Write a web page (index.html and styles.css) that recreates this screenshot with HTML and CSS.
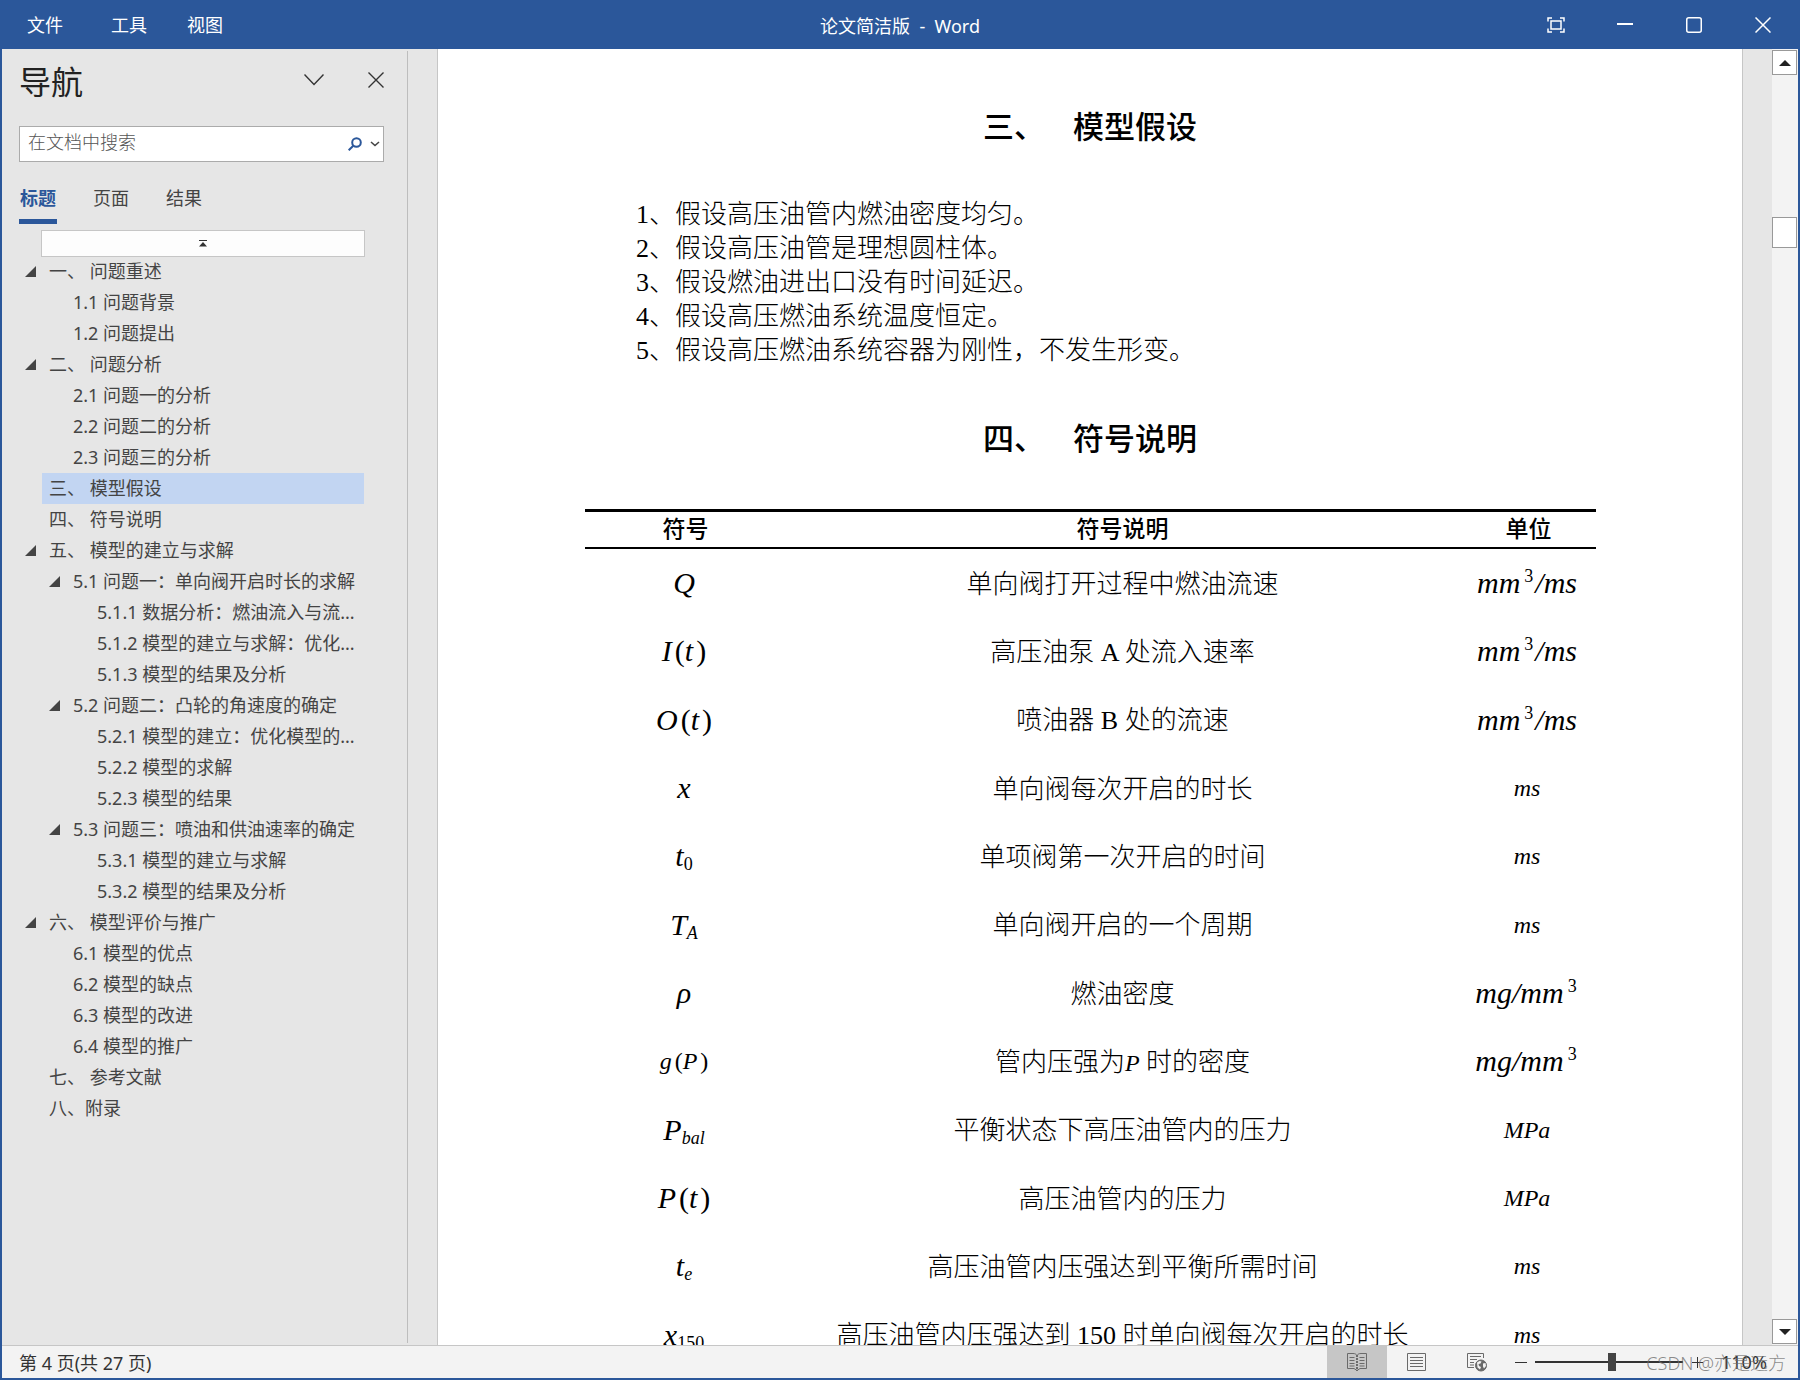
FILE: index.html
```html
<!DOCTYPE html>
<html lang="zh-CN">
<head>
<meta charset="utf-8">
<title>论文简洁版 - Word</title>
<link rel="stylesheet" href="styles.css">
</head>
<body>
<div class="window">
  <header class="titlebar">
    <nav class="menus" aria-label="菜单">
      <button type="button" class="menu menu-file">文件</button>
      <button type="button" class="menu">工具</button>
      <button type="button" class="menu">视图</button>
    </nav>
    <h1 class="title">论文简洁版  -  Word</h1>
    <div class="window-controls">
      <button type="button" class="control" aria-label="自动隐藏阅读工具栏">
        <svg width="18" height="16" viewBox="0 0 18 16" fill="none" stroke="currentColor" stroke-width="1.500"><path d="M1 4.500V1H5M13 1h4v3.500M17 11.500V15h-4M5 15H1v-3.500"/><rect x="4" y="4" width="10" height="8"/></svg>
      </button>
      <button type="button" class="control" aria-label="最小化">
        <svg width="16" height="16" viewBox="0 0 16 16"><path d="M0 6h16v2H0z" fill="currentColor"/></svg>
      </button>
      <button type="button" class="control" aria-label="最大化">
        <svg width="16" height="16" viewBox="0 0 16 16"><rect x=".75" y=".75" width="14.500" height="14.500" rx="2" fill="none" stroke="currentColor" stroke-width="1.500"/></svg>
      </button>
      <button type="button" class="control" aria-label="关闭">
        <svg width="16" height="16" viewBox="0 0 16 16"><path d="M.5.5l15 15M15.500.5l-15 15" fill="none" stroke="currentColor" stroke-width="1.500"/></svg>
      </button>
    </div>
  </header>

  <div class="workspace">
    <aside class="pane">
      <div class="pane-head">
        <h2 class="pane-title">导航</h2>
        <div class="pane-actions">
          <button type="button" class="pane-button" aria-label="任务窗格选项"><svg width="20" height="12" viewBox="0 0 20 12"><path d="M.5.5L10 10.500 19.500.5" fill="none" stroke="currentColor" stroke-width="1.400"/></svg></button>
          <button type="button" class="pane-button" aria-label="关闭窗格"><svg width="16" height="16" viewBox="0 0 16 16"><path d="M.5.5l15 15M15.500.5l-15 15" fill="none" stroke="currentColor" stroke-width="1.400"/></svg></button>
        </div>
      </div>
      <div class="search">
        <input class="search-input" type="text" placeholder="在文档中搜索" aria-label="在文档中搜索">
        <button type="button" class="search-button" aria-label="搜索"><svg width="14" height="14" viewBox="0 0 14 14" fill="none" stroke="#2b579a" stroke-width="2"><circle cx="8.500" cy="5.500" r="4.300"/><path d="M5.300 8.700L.7 13.300"/></svg></button>
        <button type="button" class="search-button" aria-label="搜索选项"><svg width="10" height="6" viewBox="0 0 10 6"><path d="M1 1l4 3.500L9 1" fill="none" stroke="#444" stroke-width="1.600"/></svg></button>
      </div>
      <div class="tabs">
        <button type="button" class="tab tab-active">标题</button>
        <button type="button" class="tab">页面</button>
        <button type="button" class="tab">结果</button>
      </div>
      <button type="button" class="jump-top" aria-label="跳转到开头"><svg width="8" height="7" viewBox="0 0 8 7"><path d="M0 0h8v1H0zM4 2l4 4.500H0z" fill="#333"/></svg></button>
      <ul class="outline">
        <li class="item parent"><a href="#s1">一、 问题重述</a></li>
        <li class="item level2"><a href="#s1-1">1.1 问题背景</a></li>
        <li class="item level2"><a href="#s1-2">1.2 问题提出</a></li>
        <li class="item parent"><a href="#s2">二、 问题分析</a></li>
        <li class="item level2"><a href="#s2-1">2.1 问题一的分析</a></li>
        <li class="item level2"><a href="#s2-2">2.2 问题二的分析</a></li>
        <li class="item level2"><a href="#s2-3">2.3 问题三的分析</a></li>
        <li class="item current"><a href="#s3">三、 模型假设</a></li>
        <li class="item"><a href="#s4">四、 符号说明</a></li>
        <li class="item parent"><a href="#s5">五、 模型的建立与求解</a></li>
        <li class="item level2 parent"><a href="#s5-1">5.1 问题一：单向阀开启时长的求解</a></li>
        <li class="item level3"><a href="#s5-1-1">5.1.1 数据分析：燃油流入与流...</a></li>
        <li class="item level3"><a href="#s5-1-2">5.1.2 模型的建立与求解：优化...</a></li>
        <li class="item level3"><a href="#s5-1-3">5.1.3 模型的结果及分析</a></li>
        <li class="item level2 parent"><a href="#s5-2">5.2 问题二：凸轮的角速度的确定</a></li>
        <li class="item level3"><a href="#s5-2-1">5.2.1 模型的建立：优化模型的...</a></li>
        <li class="item level3"><a href="#s5-2-2">5.2.2 模型的求解</a></li>
        <li class="item level3"><a href="#s5-2-3">5.2.3 模型的结果</a></li>
        <li class="item level2 parent"><a href="#s5-3">5.3 问题三：喷油和供油速率的确定</a></li>
        <li class="item level3"><a href="#s5-3-1">5.3.1 模型的建立与求解</a></li>
        <li class="item level3"><a href="#s5-3-2">5.3.2 模型的结果及分析</a></li>
        <li class="item parent"><a href="#s6">六、 模型评价与推广</a></li>
        <li class="item level2"><a href="#s6-1">6.1 模型的优点</a></li>
        <li class="item level2"><a href="#s6-2">6.2 模型的缺点</a></li>
        <li class="item level2"><a href="#s6-3">6.3 模型的改进</a></li>
        <li class="item level2"><a href="#s6-4">6.4 模型的推广</a></li>
        <li class="item"><a href="#s7">七、 参考文献</a></li>
        <li class="item"><a href="#s8">八、附录</a></li>
      </ul>
    </aside>

    <main class="page">
      <h2 class="heading" id="s3"><span class="heading-number">三、</span>模型假设</h2>
      <div class="assumptions">
        <p>1、假设高压油管内燃油密度均匀。</p>
        <p>2、假设高压油管是理想圆柱体。</p>
        <p>3、假设燃油进出口没有时间延迟。</p>
        <p>4、假设高压燃油系统温度恒定。</p>
        <p>5、假设高压燃油系统容器为刚性，不发生形变。</p>
      </div>
      <h2 class="heading heading-second" id="s4"><span class="heading-number">四、</span>符号说明</h2>
      <table class="symbols">
        <thead>
          <tr><th class="col-symbol">符号</th><th>符号说明</th><th class="col-unit">单位</th></tr>
        </thead>
        <tbody>
          <tr><td class="math">Q</td><td>单向阀打开过程中燃油流速</td><td class="math">mm<sup>3</sup>/ms</td></tr>
          <tr><td class="math">I<span class="paren">(</span>t<span class="paren">)</span></td><td>高压油泵 A 处流入速率</td><td class="math">mm<sup>3</sup>/ms</td></tr>
          <tr><td class="math">O<span class="paren">(</span>t<span class="paren">)</span></td><td>喷油器 B 处的流速</td><td class="math">mm<sup>3</sup>/ms</td></tr>
          <tr><td class="math">x</td><td>单向阀每次开启的时长</td><td class="math small">ms</td></tr>
          <tr><td class="math">t<sub class="digits">0</sub></td><td>单项阀第一次开启的时间</td><td class="math small">ms</td></tr>
          <tr><td class="math">T<sub>A</sub></td><td>单向阀开启的一个周期</td><td class="math small">ms</td></tr>
          <tr><td class="math">ρ</td><td>燃油密度</td><td class="math">mg/mm<sup>3</sup></td></tr>
          <tr><td class="math small">g<span class="paren">(</span>P<span class="paren">)</span></td><td>管内压强为<i class="math small">P</i> 时的密度</td><td class="math">mg/mm<sup>3</sup></td></tr>
          <tr><td class="math">P<sub>bal</sub></td><td>平衡状态下高压油管内的压力</td><td class="math small">MPa</td></tr>
          <tr><td class="math">P<span class="paren">(</span>t<span class="paren">)</span></td><td>高压油管内的压力</td><td class="math small">MPa</td></tr>
          <tr><td class="math">t<sub>e</sub></td><td>高压油管内压强达到平衡所需时间</td><td class="math small">ms</td></tr>
          <tr><td class="math">x<sub class="digits">150</sub></td><td>高压油管内压强达到 150 时单向阀每次开启的时长</td><td class="math small">ms</td></tr>
        </tbody>
      </table>
    </main>

    <div class="scrollbar">
      <button type="button" class="scroll-button" aria-label="向上滚动"><svg width="12" height="6" viewBox="0 0 12 6"><path d="M6 0l6 6H0z" fill="#222"/></svg></button>
      <div class="scroll-thumb"></div>
      <button type="button" class="scroll-button scroll-down" aria-label="向下滚动"><svg width="12" height="6" viewBox="0 0 12 6"><path d="M6 6l6-6H0z" fill="#222"/></svg></button>
    </div>
  </div>

  <footer class="statusbar">
    <span class="page-count">第 4 页(共 27 页)</span>
    <button type="button" class="view view-active" aria-label="阅读视图">
      <svg width="20" height="20" viewBox="0 0 20 20" fill="none" stroke="#6a6a6a"><path d="M10 3.500C9 2 8 1.500 6 1.500H.5v15H7l3 2 3-2h6.500v-15H14c-2 0-3 .5-4 2z"/><path d="M2.500 5.500h5M2.500 8.500h5M2.500 11.500h5M2.500 14h5M12.500 5.500h5M12.500 8.500h5M12.500 11.500h5M12.500 14h5"/><path d="M10 3v16" stroke-width="2" stroke-dasharray="2 1"/></svg>
    </button>
    <button type="button" class="view" aria-label="页面视图">
      <svg width="20" height="20" viewBox="0 0 20 20" fill="none" stroke="#6a6a6a"><path d="M.5 1.500h18v17H.5zM3 5.500h13M3 8.500h13M3 11.500h13M3 14.500h13"/></svg>
    </button>
    <button type="button" class="view" aria-label="Web 版式">
      <svg width="20" height="20" viewBox="0 0 20 20" fill="none" stroke="#6a6a6a"><path d="M16.500 6V1.500H.5v14H7M3 4.500h11M3 7.500h7M3 10.500h4M3 13h4"/><circle cx="14" cy="13.500" r="5.500" fill="#6a6a6a"/><path d="M10 10.500l2.500-1.500 2 .5-1 2-2 .5.500 2 2 1-1 2.500-2.500-2zM16 11.500l2.500-.5.500 3-2 2.500-1-2z" fill="#f3f3f3" stroke="none"/></svg>
    </button>
    <button type="button" class="zoom-step" aria-label="缩小"><svg width="12" height="12" viewBox="0 0 12 12"><path d="M0 6.500h12" stroke="#333"/></svg></button>
    <input class="zoom-slider" type="range" min="0" max="100" value="52" aria-label="缩放">
    <button type="button" class="zoom-step" aria-label="放大"><svg width="12" height="12" viewBox="0 0 12 12"><path d="M1 6.500h11M6.500 1v11" stroke="#333"/></svg></button>
    <span class="zoom-value">110%</span>
    <span class="watermark">CSDN @亦是远方</span>
  </footer>
</div>
</body>
</html>
```
FILE: styles.css
```css
* { box-sizing: border-box; }

body {
  margin: 0;
  font-family: "Noto Sans", "Noto Sans CJK SC", sans-serif;
  font-size: 18px;
  color: #444;
}

h1, h2, p, ul { margin: 0; padding: 0; }

button {
  padding: 0;
  border: 0;
  background: none;
  font: inherit;
  color: inherit;
}

svg { display: block; }

.window {
  display: flex;
  flex-direction: column;
  height: 100vh;
  border: solid #2b579a;
  border-width: 0 2px 2px;
  background: #e6e6e6;
}

/* Title bar */
.titlebar {
  display: grid;
  grid-template-columns: 1fr auto 1fr;
  align-items: center;
  flex: none;
  height: 49px;
  background: #2b579a;
  color: #fff;
}

.menus { display: flex; gap: 40px; padding-left: 25px; }
.menu { line-height: 30px; }
.menu-file { margin-right: 8px; }
.title { font-size: 18px; font-weight: 400; white-space: pre; }
.window-controls { display: flex; justify-content: flex-end; padding-right: 1px; }
.control { display: grid; place-items: center; width: 69px; height: 49px; }

/* Workspace */
.workspace { display: flex; flex: 1; min-height: 0; }

.pane {
  flex: none;
  width: 406px;
  margin: 2px 29px 2px 0;
  padding: 8px 23px 0 17px;
  border-right: 1px solid #bdbdbd;
}

.pane-head { display: flex; justify-content: space-between; height: 67px; }
.pane-title { font-size: 32px; font-weight: 400; line-height: 46px; color: #222; }
.pane-actions { display: flex; gap: 44px; align-items: center; height: 42px; color: #333; }

.search {
  display: flex;
  align-items: center;
  gap: 8px;
  height: 36px;
  padding: 0 3px 0 8px;
  border: 1px solid #ababab;
  background: #fff;
}

.search-input {
  flex: 1;
  min-width: 0;
  padding: 0 0 4px;
  border: 0;
  background: none;
  font: inherit;
  font-weight: 300;
}

.search-input::placeholder { color: #555; opacity: 1; }

.tabs { display: flex; gap: 35px; padding-top: 20px; }
.tab { height: 42px; padding: 0 1px 10px; line-height: 32px; border-bottom: 5px solid transparent; }
.tab-active { border-color: #2b579a; font-weight: 700; color: #2b579a; }

.jump-top {
  display: grid;
  place-items: center;
  width: 324px;
  height: 27px;
  margin: 6px 0 0 22px;
  border: 1px solid #c6c6c6;
  background: #fdfdfd;
}

.outline { list-style: none; margin: -1px 20px 0 0; white-space: nowrap; }
.item { display: flex; align-items: center; height: 31px; margin-left: 23px; padding-left: 7px; }
.item a { color: inherit; text-decoration: none; line-height: 31px; }
.level2 { padding-left: 31px; }
.level3 { padding-left: 55px; }
.current { background: #c2d5f2; }

.parent::before {
  content: "";
  width: 11px;
  height: 11px;
  margin: 0 13px 0 -24px;
  background: #444;
  clip-path: polygon(100% 0, 100% 100%, 0 100%);
}

/* Document */
.page {
  flex: 1;
  min-width: 0;
  padding-top: 59px;
  overflow: hidden;
  border: solid #c6c6c6;
  border-width: 0 1px;
  background: #fff;
  font-family: "Liberation Serif", "Noto Sans CJK SC", serif;
  font-size: 26px;
  font-weight: 300;
  color: #000;
}

.heading { font-size: 31px; font-weight: 500; line-height: 40px; text-align: center; }
.heading-number { margin-right: 28px; }
.heading-second { margin-top: 52px; }
.assumptions { margin: 50px 0 0 198px; line-height: 34px; }

.symbols {
  width: 1011px;
  max-width: 100%;
  margin: 49px auto 0;
  table-layout: fixed;
  border-collapse: separate;
  border-spacing: 0;
  text-align: center;
  white-space: nowrap;
}

.symbols th {
  height: 40px;
  padding: 1px 0 0 3px;
  border: solid #000;
  border-width: 3px 0 2px;
  font-size: 23px;
  font-weight: 500;
  line-height: 34px;
}

.symbols td { height: 68px; padding: 3px 0 0 3px; line-height: 34px; }
.symbols tr:nth-child(3n) td { height: 69px; }
.col-symbol { width: 199px; }
.col-unit { width: 137px; }

.symbols .math { padding: 0; font-size: 30px; font-style: italic; font-weight: 400; }
.symbols .small { font-size: 24px; }
.paren { margin-left: 3px; font-style: normal; }
.math .digits, .math sup { font-style: normal; }
.math sub, .math sup { font-size: 18px; line-height: 0; }
.math sub { vertical-align: -4px; }
.math sup { padding: 0 2px 0 4px; }

/* Scroll bar */
.scrollbar {
  display: flex;
  flex-direction: column;
  flex: none;
  width: 26px;
  margin-left: 29px;
  padding: 1px 1px 1px 0;
  background: #f3f3f3;
}

.scroll-button, .scroll-thumb { flex: none; height: 25px; border: 1px solid #999; background: #fff; }
.scroll-button { display: grid; place-items: center; }
.scroll-thumb { height: 31px; margin-top: 142px; }
.scroll-down { margin-top: auto; }

/* Status bar */
.statusbar {
  position: relative;
  display: flex;
  align-items: center;
  flex: none;
  height: 33px;
  border-top: 1px solid #c6c6c6;
  background: #f3f3f3;
  color: #333;
}

.page-count { margin-right: auto; padding-left: 17px; }
.view { display: grid; place-items: center; width: 60px; height: 32px; }
.view-active { background: #c6c6c6; }
.zoom-step { margin: 0 8px; }

.zoom-slider {
  width: 148px;
  height: 18px;
  margin: 0;
  appearance: none;
  background: linear-gradient(#333, #333) center / 100% 2px no-repeat;
}

.zoom-slider::-webkit-slider-thumb { appearance: none; width: 8px; height: 18px; background: #444; }
.zoom-value { width: 87px; padding-left: 10px; }

.watermark {
  position: absolute;
  right: 12px;
  bottom: 3px;
  color: rgba(110, 110, 110, 0.8);
  font-weight: 300;
}
```
